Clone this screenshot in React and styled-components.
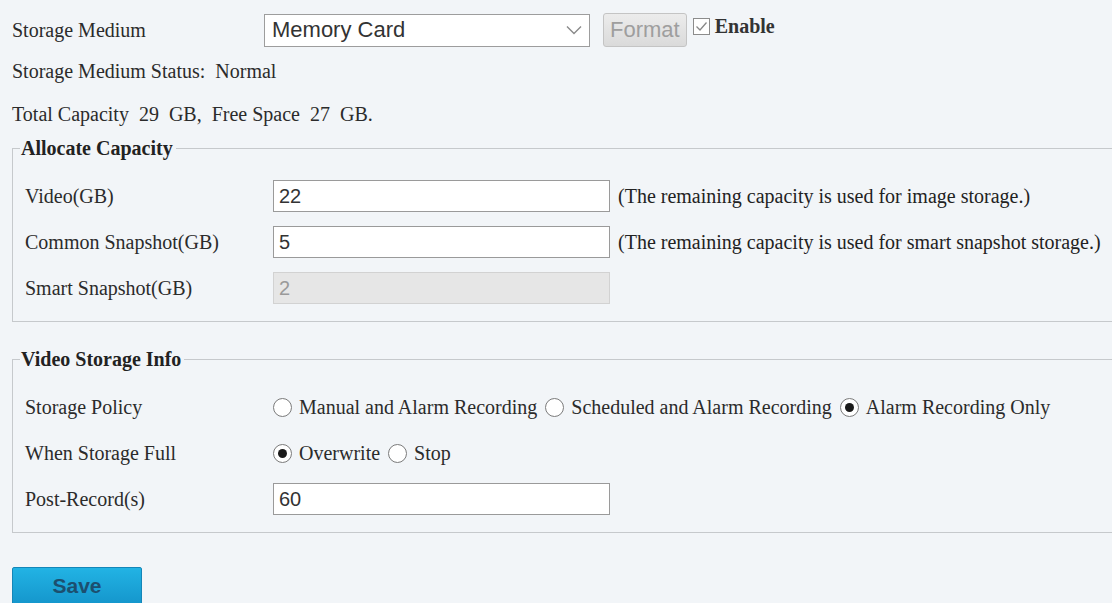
import React from 'react'
import styled, { createGlobalStyle } from 'styled-components'

const GlobalStyle = createGlobalStyle`
    html, body {
        margin: 0;
        padding: 0;
        background: #f2f5f8;
        overflow: hidden;
    }
    body {
        font-family: "Liberation Serif", "Times New Roman", serif;
        color: #2b2b2b;
    }
`

const Page = styled.main`
    width: 1112px;
    height: 603px;
    padding: 13px 0 0 12px;
    box-sizing: border-box;
    font-size: 20px;
`

const TopRow = styled.div`
    display: grid;
    grid-template-columns: 252px auto auto auto auto;
    justify-content: start;
    align-items: center;
    height: 34px;
`

const Label = styled.span`
    font-size: 20px;
    line-height: 24px;
    white-space: nowrap;
`

const SelectBox = styled.div`
    width: 326px;
    height: 33px;
    box-sizing: border-box;
    border: 1px solid #9d9d9d;
    background: #fff;
    display: flex;
    align-items: center;
    justify-content: space-between;
    padding: 0 6px 0 7px;
    font-family: "Liberation Sans", Arial, sans-serif;
    font-size: 22px;
    color: #333;
`

const Chevron = () => (
    <svg width="18" height="12" viewBox="0 0 18 12" fill="none">
        <path d="M2 2.5 L9 9.5 L16 2.5" stroke="#8a8a8a" strokeWidth="1.4" />
    </svg>
)

const FormatButton = styled.button`
    margin-left: 13px;
    height: 34px;
    padding: 0 6px;
    border: 1px solid #c4c4c4;
    border-radius: 3px;
    background: linear-gradient(#ececec, #dadada);
    color: #9e9e9e;
    font-family: "Liberation Sans", Arial, sans-serif;
    font-size: 22px;
`

const CheckBox = styled.span`
    margin-left: 6px;
    width: 17px;
    height: 17px;
    box-sizing: border-box;
    border: 1px solid #8c8c8c;
    background: #fff;
    display: flex;
    align-items: center;
    justify-content: center;
    align-self: start;
    margin-top: 5px;
`

const CheckText = styled.span`
    margin-left: 5px;
    font-weight: bold;
    font-size: 20px;
    align-self: start;
    line-height: 26px;
    color: #333;
`

const InfoLine = styled.div`
    height: 43px;
    line-height: 43px;
    margin-top: ${p => p.$top || 0}px;
    white-space: pre;
`

const Fieldset = styled.fieldset`
    margin: ${p => p.$top}px -20px 0 0;
    padding: 20px 0 17px 12px;
    border: 1px solid #c6c9cc;
    min-width: 0;
`

const Legend = styled.legend`
    margin-left: -5px;
    padding: 0 3px 0 1px;
    font-weight: bold;
    font-size: 20px;
    line-height: 23px;
    color: #222;
`

const FieldGrid = styled.div`
    display: grid;
    grid-template-columns: 248px 337px auto;
    grid-auto-rows: 32px;
    row-gap: 14px;
    align-items: center;
`

const TextInput = styled.div`
    height: 32px;
    box-sizing: border-box;
    border: 1px solid ${p => (p.$disabled ? '#d2d2d2' : '#9a9a9a')};
    background: ${p => (p.$disabled ? '#e6e6e6' : '#fff')};
    color: ${p => (p.$disabled ? '#9a9a9a' : '#333')};
    font-family: "Liberation Sans", Arial, sans-serif;
    font-size: 20px;
    line-height: 30px;
    padding-left: 5px;
`

const Note = styled.span`
    margin-left: 8px;
    white-space: nowrap;
    color: #222;
`

const RadioGroup = styled.div`
    display: flex;
    align-items: center;
    grid-column: 2 / 4;
    white-space: nowrap;
`

const RadioOption = styled.span`
    display: flex;
    align-items: center;
    margin-right: 8px;
`

const RadioCircle = styled.span`
    width: 19px;
    height: 19px;
    box-sizing: border-box;
    border-radius: 50%;
    border: 1px solid #7b7b7b;
    background: #fff;
    margin-right: 7px;
    display: flex;
    align-items: center;
    justify-content: center;
    &::after {
        content: '';
        width: 9px;
        height: 9px;
        border-radius: 50%;
        background: ${p => (p.$checked ? '#1a1a1a' : 'transparent')};
    }
`

const SaveButton = styled.button`
    margin-top: 34px;
    width: 130px;
    height: 38px;
    border: 1px solid #1486b8;
    border-radius: 2px;
    background: linear-gradient(#22b3e4, #1596cc);
    color: #1c4f6f;
    font-family: "Liberation Sans", Arial, sans-serif;
    font-size: 21px;
    font-weight: bold;
`

const Radio = ({ checked, children }) => (
    <RadioOption>
        <RadioCircle $checked={checked} />
        {children}
    </RadioOption>
)

const App = () => {
    return (
        <>
            <GlobalStyle />
            <Page>
                <TopRow>
                    <Label>Storage Medium</Label>
                    <SelectBox>
                        Memory Card
                        <Chevron />
                    </SelectBox>
                    <FormatButton>Format</FormatButton>
                    <CheckBox>
                        <svg width="13" height="11" viewBox="0 0 13 11" fill="none">
                            <path d="M1.5 5.5 L5 9 L11.5 1.5" stroke="#888" strokeWidth="1.3" />
                        </svg>
                    </CheckBox>
                    <CheckText>Enable</CheckText>
                </TopRow>

                <InfoLine $top={3}>Storage Medium Status:  Normal</InfoLine>
                <InfoLine>Total Capacity  29  GB,  Free Space  27  GB.</InfoLine>

                {/* allocate capacity */}
                <Fieldset $top={1}>
                    <Legend>Allocate Capacity</Legend>
                    <FieldGrid>
                        <Label>Video(GB)</Label>
                        <TextInput>22</TextInput>
                        <Note>(The remaining capacity is used for image storage.)</Note>

                        <Label>Common Snapshot(GB)</Label>
                        <TextInput>5</TextInput>
                        <Note>(The remaining capacity is used for smart snapshot storage.)</Note>

                        <Label>Smart Snapshot(GB)</Label>
                        <TextInput $disabled>2</TextInput>
                        <span />
                    </FieldGrid>
                </Fieldset>

                {/* video storage */}
                <Fieldset $top={26}>
                    <Legend>Video Storage Info</Legend>
                    <FieldGrid>
                        <Label>Storage Policy</Label>
                        <RadioGroup>
                            <Radio>Manual and Alarm Recording</Radio>
                            <Radio>Scheduled and Alarm Recording</Radio>
                            <Radio checked>Alarm Recording Only</Radio>
                        </RadioGroup>

                        <Label>When Storage Full</Label>
                        <RadioGroup>
                            <Radio checked>Overwrite</Radio>
                            <Radio>Stop</Radio>
                        </RadioGroup>

                        <Label>Post-Record(s)</Label>
                        <TextInput>60</TextInput>
                        <span />
                    </FieldGrid>
                </Fieldset>

                <SaveButton>Save</SaveButton>
            </Page>
        </>
    )
}

export default App
